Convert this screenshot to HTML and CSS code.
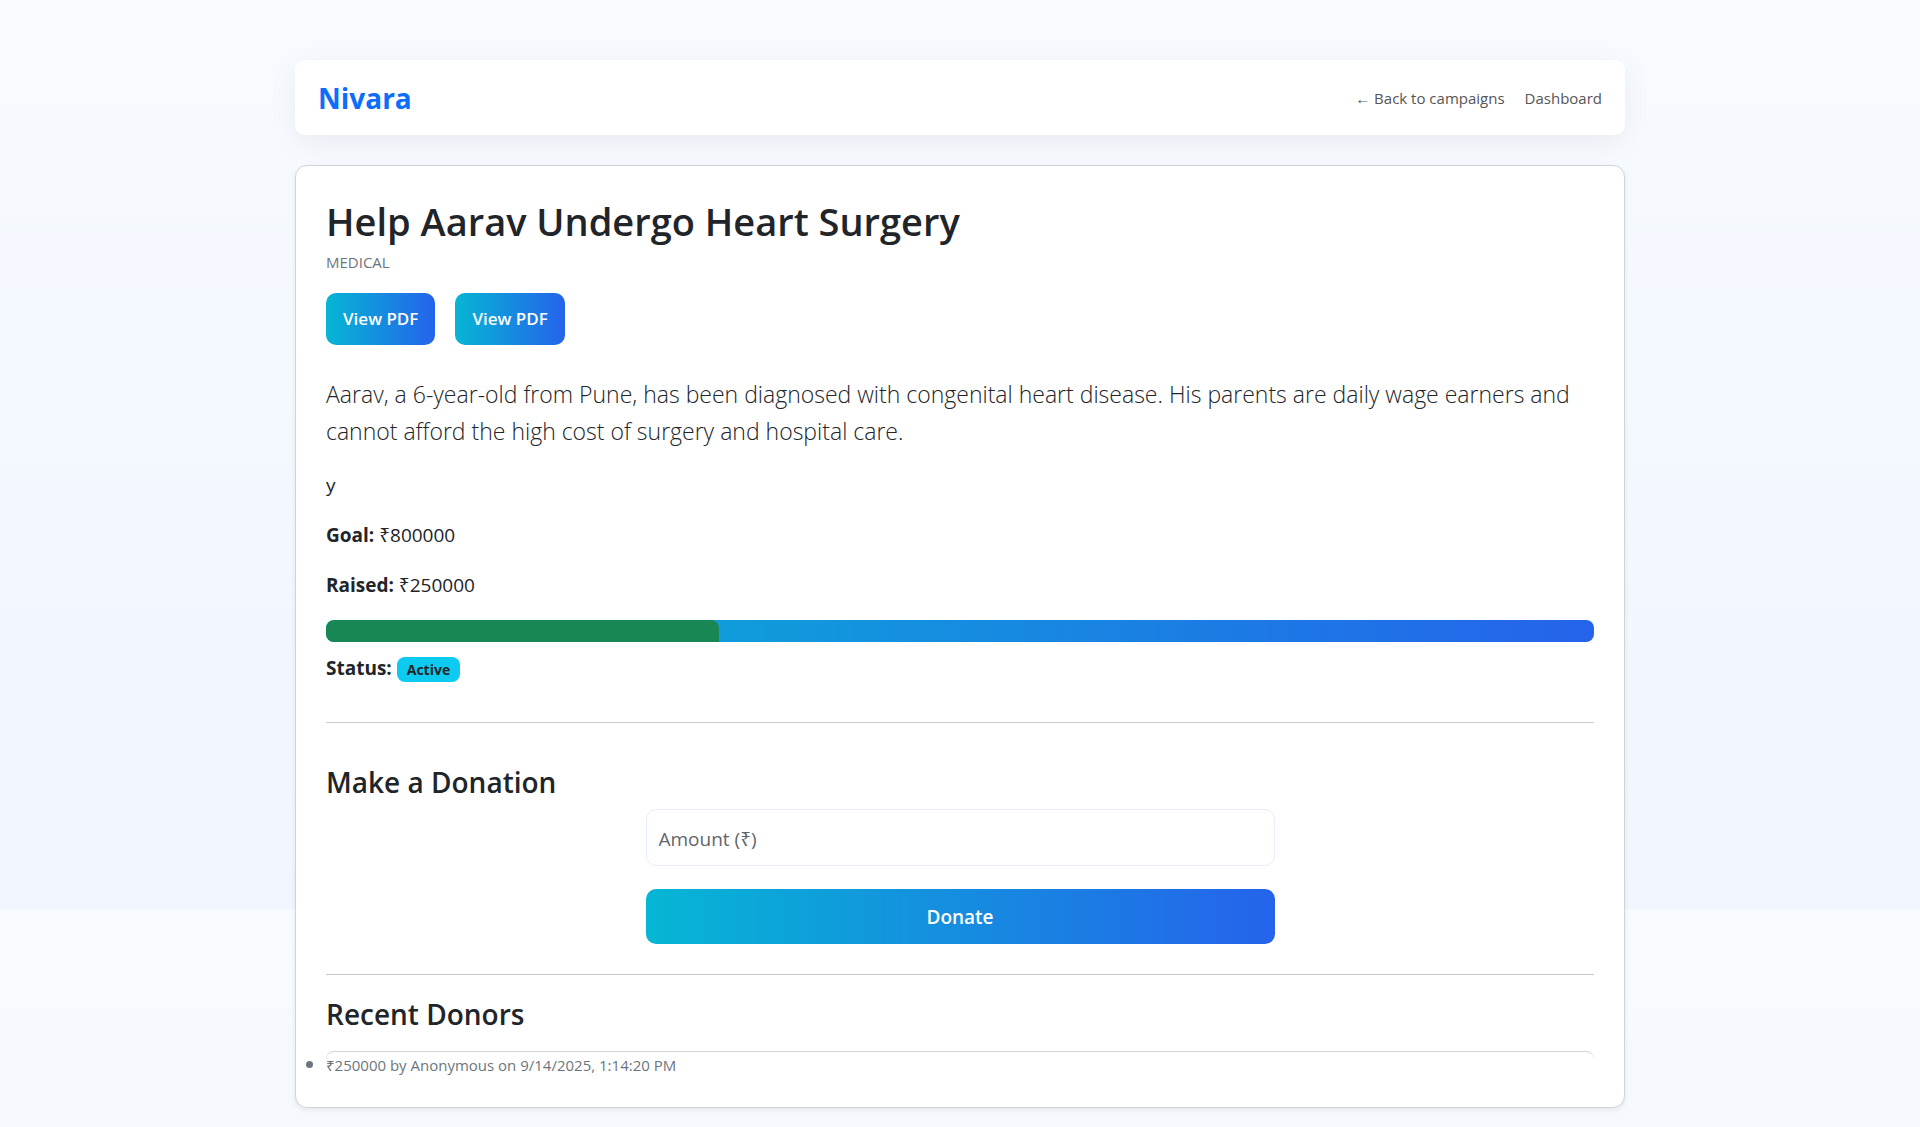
FILE: index.html
```html
<!DOCTYPE html>
<html lang="en">
<head>
  <meta charset="utf-8">
  <meta name="viewport" content="width=device-width, initial-scale=1">
  <title>Nivara</title>
  <link rel="stylesheet" href="styles.css">
</head>
<body>
  <div class="container">
    <header class="site-header">
      <a class="brand" href="#">Nivara</a>
      <nav class="site-nav">
        <a href="#">← Back to campaigns</a>
        <a href="#">Dashboard</a>
      </nav>
    </header>

    <main class="card">
      <h1 class="title">Help Aarav Undergo Heart Surgery</h1>
      <p class="category">MEDICAL</p>
      <div class="documents">
        <a class="btn" href="#">View PDF</a>
        <a class="btn" href="#">View PDF</a>
      </div>
      <p class="lead">Aarav, a 6-year-old from Pune, has been diagnosed with congenital heart disease. His parents are daily wage earners and cannot afford the high cost of surgery and hospital care.</p>
      <p class="detail">y</p>
      <p class="detail"><strong>Goal:</strong> ₹800000</p>
      <p class="detail"><strong>Raised:</strong> ₹250000</p>
      <div class="progress" role="progressbar" aria-label="Raised" aria-valuenow="31" aria-valuemin="0" aria-valuemax="100">
        <div class="progress-bar" style="width: 31%"></div>
      </div>
      <p class="status"><strong>Status:</strong> <span class="badge">Active</span></p>

      <hr class="rule">

      <section class="donation">
        <h2 class="subtitle">Make a Donation</h2>
        <form class="donate-form">
          <input class="amount" type="text" inputmode="numeric" placeholder="Amount (₹)" aria-label="Amount (₹)">
          <button class="btn btn-donate" type="button">Donate</button>
        </form>
      </section>

      <hr class="rule">

      <section class="donors">
        <h2 class="subtitle">Recent Donors</h2>
        <ul class="donor-list">
          <li>₹250000 by Anonymous on 9/14/2025, 1:14:20 PM</li>
        </ul>
      </section>
    </main>
  </div>
</body>
</html>
```

FILE: styles.css
```css
* {
  box-sizing: border-box;
}

html {
  background: #f0f5ff;
}

body {
  margin: 0;
  color: #212529;
  background: linear-gradient(180deg, #f7fbff 0%, #f0f5ff 100%) 0 0 / 100% 909px repeat-y;
  font-family: "Segoe UI", "Open Sans", "Noto Sans", sans-serif;
  font-size: 19px;
  line-height: 30px;
}

h1,
h2,
p,
ul {
  margin: 0;
}

.container {
  max-width: 1370px;
  margin: 0 auto;
  padding: 60px 20px 20px;
}

.site-header {
  display: flex;
  align-items: center;
  justify-content: space-between;
  min-height: 75px;
  margin-bottom: 30px;
  padding: 0 23px;
  border-radius: 10px;
  background: #fff;
  box-shadow: 0 8px 30px rgba(15, 23, 42, 0.06);
}

.brand {
  color: #0d6efd;
  font-size: 28px;
  font-weight: 700;
  text-decoration: none;
}

.site-nav {
  display: flex;
  gap: 20px;
}

.site-nav a {
  color: #555;
  font-size: 15px;
  text-decoration: none;
}

.card {
  padding: 30px;
  border: 1px solid #d2d3d4;
  border-radius: 12px;
  background: #fff;
  box-shadow: 0 2px 5px rgba(0, 0, 0, 0.08);
}

.title {
  margin-bottom: 4px;
  font-size: 38px;
  font-weight: 600;
  line-height: 50px;
}

.category {
  margin-bottom: 18px;
  color: #6c757d;
  font-size: 15px;
  line-height: 25px;
}

.documents {
  display: flex;
  gap: 20px;
  margin-bottom: 31px;
}

.btn {
  padding: 11px 17px;
  border: 0;
  border-radius: 10px;
  color: #fff;
  background: linear-gradient(90deg, #06b6d4, #2563eb);
  font-family: inherit;
  font-size: 17px;
  font-weight: 600;
  line-height: 30px;
  text-decoration: none;
}

.lead {
  margin-bottom: 20px;
  font-size: 23px;
  font-weight: 300;
  line-height: 37px;
}

.detail {
  margin-bottom: 20px;
}

.progress {
  height: 22px;
  margin-bottom: 11px;
  overflow: hidden;
  border-radius: 8px;
  background: linear-gradient(90deg, #06b6d4, #2563eb);
}

.progress-bar {
  height: 100%;
  border-radius: 8px 8px 0 0;
  background: #198754;
}

.status {
  margin-bottom: 39px;
}

.badge {
  display: inline-block;
  padding: 5px 10px;
  border-radius: 8px;
  background: #0dcaf0;
  font-size: 14px;
  font-weight: 700;
  line-height: 15px;
}

.rule {
  margin: 30px 0;
  border: 0;
  border-top: 1px solid #c8c9ca;
}

.subtitle {
  font-size: 28px;
  font-weight: 600;
  line-height: 36px;
}

.donation .subtitle {
  margin: 41px 0 9px;
}

.donate-form {
  display: flex;
  flex-direction: column;
  gap: 23px;
  width: 100%;
  max-width: 629px;
  margin: 0 auto;
}

.amount {
  width: 100%;
  padding: 14px 12px 11px;
  border: 1px solid #e6eefb;
  border-radius: 10px;
  color: #212529;
  background: #fff;
  font: inherit;
}

.amount::placeholder {
  color: #5f666d;
  opacity: 1;
}

.btn-donate {
  padding: 13px 17px 12px;
  font-size: 19px;
}

.donors .subtitle {
  margin: -9px 0 19px;
}

.donor-list {
  padding: 0;
  border-top: 1px solid #d2d3d4;
  border-radius: 8px;
  color: #6c757d;
  font-size: 15px;
  line-height: 24px;
}

.donor-list li::marker {
  font-size: 19px;
}
```
